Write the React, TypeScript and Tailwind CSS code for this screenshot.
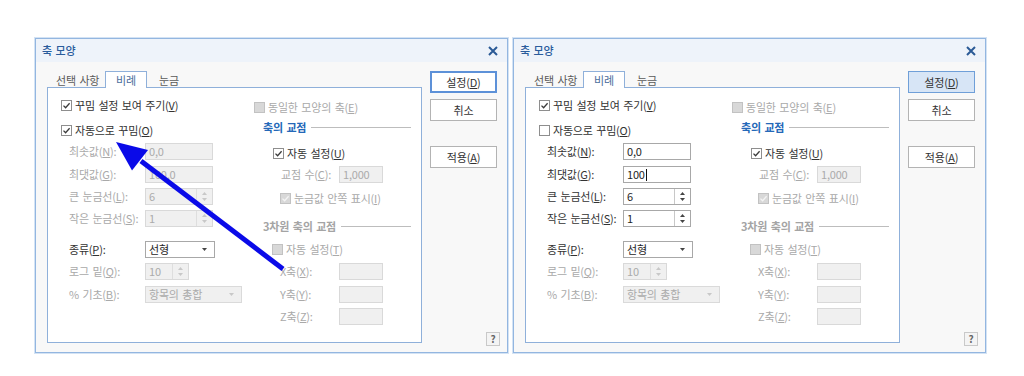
import React from "react";

const FONT = "font-['Noto_Sans_CJK_KR','Noto_Sans',sans-serif]";

function Check({ checked, disabled }: { checked: boolean; disabled?: boolean }) {
  const box = disabled
    ? "bg-[#d8d8d8] border-[#c2c2c2]"
    : "bg-white border-[#8e8e8e]";
  return (
    <div className={`w-[11px] h-[11px] border ${box} flex items-center justify-center shrink-0`}>
      {checked && (
        <svg width="9" height="9" viewBox="0 0 9 9">
          <path d="M1.5 4.6 L3.6 6.7 L7.6 2.2" fill="none" stroke={disabled ? "#f4f4f4" : "#3a3a3a"} strokeWidth="1.3" />
        </svg>
      )}
    </div>
  );
}

function CheckRow({
  checked,
  disabled,
  children,
  cls,
}: {
  checked: boolean;
  disabled?: boolean;
  children: React.ReactNode;
  cls: string;
}) {
  return (
    <div className={`flex items-center gap-[3px] ${cls}`}>
      <Check checked={checked} disabled={disabled} />
      <span className={disabled ? "text-[#a9a9a9]" : "text-[#333333]"}>{children}</span>
    </div>
  );
}

function Field({
  value,
  disabled,
  w,
  spin,
  caret,
}: {
  value: string;
  disabled?: boolean;
  w: string;
  spin?: boolean;
  caret?: boolean;
}) {
  const box = disabled
    ? "bg-[#f0f0f0] border-[#d9d9d9] text-[#ababab]"
    : "bg-white border-[#a8a8a8] text-[#1e1e1e]";
  const tri = disabled ? "#c8c8c8" : "#444";
  return (
    <div className={`${w} h-[17px] border ${box} flex items-stretch`}>
      <div className="flex-1 flex items-center pl-[3px] leading-none">
        {value}
        {caret && <span className="inline-block w-px h-[12px] bg-[#111] ml-px" />}
      </div>
      {spin && (
        <div className={`w-[16px] border-l ${disabled ? "border-[#dedede]" : "border-[#c8c8c8]"} flex flex-col items-center justify-center gap-[3px]`}>
          <svg width="5" height="3" viewBox="0 0 5 3">
            <path d="M0 3 L2.5 0 L5 3 Z" fill={tri} />
          </svg>
          <svg width="5" height="3" viewBox="0 0 5 3">
            <path d="M0 0 L2.5 3 L5 0 Z" fill={tri} />
          </svg>
        </div>
      )}
    </div>
  );
}

function Select({ value, disabled, w }: { value: string; disabled?: boolean; w: string }) {
  const box = disabled
    ? "bg-[#f0f0f0] border-[#dadada] text-[#ababab]"
    : "bg-white border-[#a8a8a8] text-[#1e1e1e]";
  return (
    <div className={`${w} h-[17px] border ${box} flex items-center justify-between pl-[3px] pr-[7px]`}>
      <span className="leading-none">{value}</span>
      <svg width="5" height="3" viewBox="0 0 5 3">
        <path d="M0 0 L2.5 3 L5 0 Z" fill={disabled ? "#c8c8c8" : "#444"} />
      </svg>
    </div>
  );
}

function Label({ children, disabled, w }: { children: React.ReactNode; disabled?: boolean; w: string }) {
  return (
    <div className={`${w} shrink-0 ${disabled ? "text-[#a9a9a9]" : "text-[#333333]"}`}>{children}</div>
  );
}

function Heading({ children, active, cls }: { children: React.ReactNode; active: boolean; cls: string }) {
  return (
    <div className={`flex items-center pl-[9px] pr-[10px] h-[16px] ${cls}`}>
      <span className={`font-bold ${active ? "text-[#2468b8]" : "text-[#a4a4a4]"}`}>{children}</span>
      <div className="flex-1 h-px bg-[#bdbdbd] ml-[5px]" />
    </div>
  );
}

function Dialog({ variant }: { variant: "left" | "right" }) {
  const manual = variant === "right";
  const dis = !manual;
  return (
    <div className="w-[473px] h-[315px] border border-[#93b6e0] bg-[#f8f8f8] flex flex-col shadow-[0_0_0_1px_#d4e3f4]">
      {/* title bar */}
      <div className="h-[23px] bg-[#eef3fa] flex items-center justify-between pl-[6px] pr-[9px]">
        <span className="text-[11px] font-medium text-[#2a5c9c]">축 모양</span>
        <svg width="10" height="10" viewBox="0 0 10 10">
          <path d="M1 1 L9 9 M9 1 L1 9" stroke="#2b5a96" strokeWidth="2" />
        </svg>
      </div>
      {/* body */}
      <div className="flex flex-1 pl-[11px] pt-[9px] pb-[9px]">
        <div className="w-[375px] flex flex-col">
          {/* tabs */}
          <div className="h-[16px] flex items-end relative z-10">
            <div className="pl-[9px] w-[58px] h-[14px] text-[#5a5a5a] leading-[14px] whitespace-nowrap">선택 사항</div>
            <div className="w-[42px] h-[17px] border border-b-0 border-[#8fb0da] bg-white text-[#4c6e9c] flex items-center justify-center mb-[-1px] leading-none">
              비례
            </div>
            <div className="pl-[12px] h-[14px] text-[#5a5a5a] leading-[14px]">눈금</div>
          </div>
          {/* panel */}
          <div className="flex-1 border border-[#8fb0da] bg-white flex">
            {/* left column */}
            <div className="w-[206px] flex flex-col">
              <CheckRow checked cls="h-[18px] mt-[8px] pl-[13px]">
                꾸밈 설정 보여 주기(<u>V</u>)
              </CheckRow>
              <CheckRow checked={!manual} cls="h-[18px] mt-[7px] pl-[13px]">
                자동으로 꾸밈(<u>O</u>)
              </CheckRow>
              <div className="flex items-center h-[17px] mt-[4px] pl-[21px]">
                <Label disabled={dis} w="w-[76px]">최솟값(<u>N</u>):</Label>
                <Field value="0,0" disabled={dis} w="w-[68px]" />
              </div>
              <div className="flex items-center h-[17px] mt-[6px] pl-[21px]">
                <Label disabled={dis} w="w-[76px]">최댓값(<u>G</u>):</Label>
                <Field value={manual ? "100" : "100,0"} caret={manual} disabled={dis} w="w-[68px]" />
              </div>
              <div className="flex items-center h-[17px] mt-[5px] pl-[21px]">
                <Label disabled={dis} w="w-[76px]">큰 눈금선(<u>L</u>):</Label>
                <Field value="6" spin disabled={dis} w="w-[68px]" />
              </div>
              <div className="flex items-center h-[17px] mt-[5px] pl-[21px]">
                <Label disabled={dis} w="w-[76px]">작은 눈금선(<u>S</u>):</Label>
                <Field value="1" spin disabled={dis} w="w-[68px]" />
              </div>
              <div className="flex items-center h-[17px] mt-[14px] pl-[21px]">
                <Label w="w-[76px]">종류(<u>P</u>):</Label>
                <Select value="선형" w="w-[70px]" />
              </div>
              <div className="flex items-center h-[17px] mt-[5px] pl-[21px]">
                <Label disabled w="w-[76px]">로그 밑(<u>Q</u>):</Label>
                <Field value="10" spin disabled w="w-[44px]" />
              </div>
              <div className="flex items-center h-[17px] mt-[6px] pl-[21px]">
                <Label disabled w="w-[76px]">% 기초(<u>B</u>):</Label>
                <Select value="항목의 총합" disabled w="w-[97px]" />
              </div>
            </div>
            {/* right column */}
            <div className="flex-1 flex flex-col">
              <CheckRow checked={false} disabled cls="h-[18px] mt-[10px] pl-[0px]">
                동일한 모양의 축(<u>E</u>)
              </CheckRow>
              <Heading active cls="mt-[3px]">축의 교점</Heading>
              <CheckRow checked cls="h-[17px] mt-[10px] pl-[19px]">
                자동 설정(<u>U</u>)
              </CheckRow>
              <div className="flex items-center h-[17px] mt-[4px] pl-[27px]">
                <Label disabled w="w-[58px]">교점 수(<u>C</u>):</Label>
                <Field value="1,000" disabled w="w-[44px]" />
              </div>
              <CheckRow checked disabled cls="h-[18px] mt-[6px] pl-[26px]">
                눈금값 안쪽 표시(<u>I</u>)
              </CheckRow>
              <Heading active={false} cls="mt-[11px]">3차원 축의 교점</Heading>
              <CheckRow checked={false} disabled cls="h-[18px] mt-[6px] pl-[18px]">
                자동 설정(<u>T</u>)
              </CheckRow>
              <div className="flex items-center h-[17px] mt-[5px] pl-[26px]">
                <Label disabled w="w-[59px]">X축(<u>X</u>):</Label>
                <Field value="" disabled w="w-[44px]" />
              </div>
              <div className="flex items-center h-[17px] mt-[6px] pl-[26px]">
                <Label disabled w="w-[59px]">Y축(<u>Y</u>):</Label>
                <Field value="" disabled w="w-[44px]" />
              </div>
              <div className="flex items-center h-[17px] mt-[5px] pl-[26px]">
                <Label disabled w="w-[59px]">Z축(<u>Z</u>):</Label>
                <Field value="" disabled w="w-[44px]" />
              </div>
            </div>
          </div>
        </div>
        {/* buttons */}
        <div className="ml-[8px] w-[70px] flex flex-col">
          <div
            className={`w-[67px] h-[22px] flex items-center justify-center text-[#333333] ${
              manual ? "bg-[#d7e5f6] border border-[#6f9fd8]" : "bg-white border-2 border-[#5d91d8]"
            }`}
          >
            설정(<u>D</u>)
          </div>
          <div className="w-[67px] h-[22px] mt-[6px] bg-white border border-[#b3b3b3] flex items-center justify-center text-[#333333]">
            취소
          </div>
          <div className="w-[67px] h-[22px] mt-[25px] bg-white border border-[#b3b3b3] flex items-center justify-center text-[#333333]">
            적용(<u>A</u>)
          </div>
          <div className="mt-auto self-end mb-[-3px] w-[14px] h-[14px] border border-[#c9c9c9] bg-[#f4f4f4] flex items-center justify-center text-[10px] font-bold text-[#666] leading-none">
            ?
          </div>
        </div>
      </div>
    </div>
  );
}

export default function App() {
  return (
    <div className={`relative w-[1024px] h-[376px] bg-white overflow-hidden ${FONT} text-[11px] tracking-[-0.2px] [word-spacing:1.3px]`}>
      <div className="flex gap-[5px] pl-[35px] pt-[38px]">
        <Dialog variant="left" />
        <Dialog variant="right" />
      </div>
      <svg className="absolute left-0 top-0 pointer-events-none" width="1024" height="376" viewBox="0 0 1024 376">
        <line x1="283" y1="269" x2="141" y2="161" stroke="#0a0ae8" strokeWidth="5" />
        <polygon points="116,142 132,170.5 148,150" fill="#0a0ae8" />
      </svg>
    </div>
  );
}
